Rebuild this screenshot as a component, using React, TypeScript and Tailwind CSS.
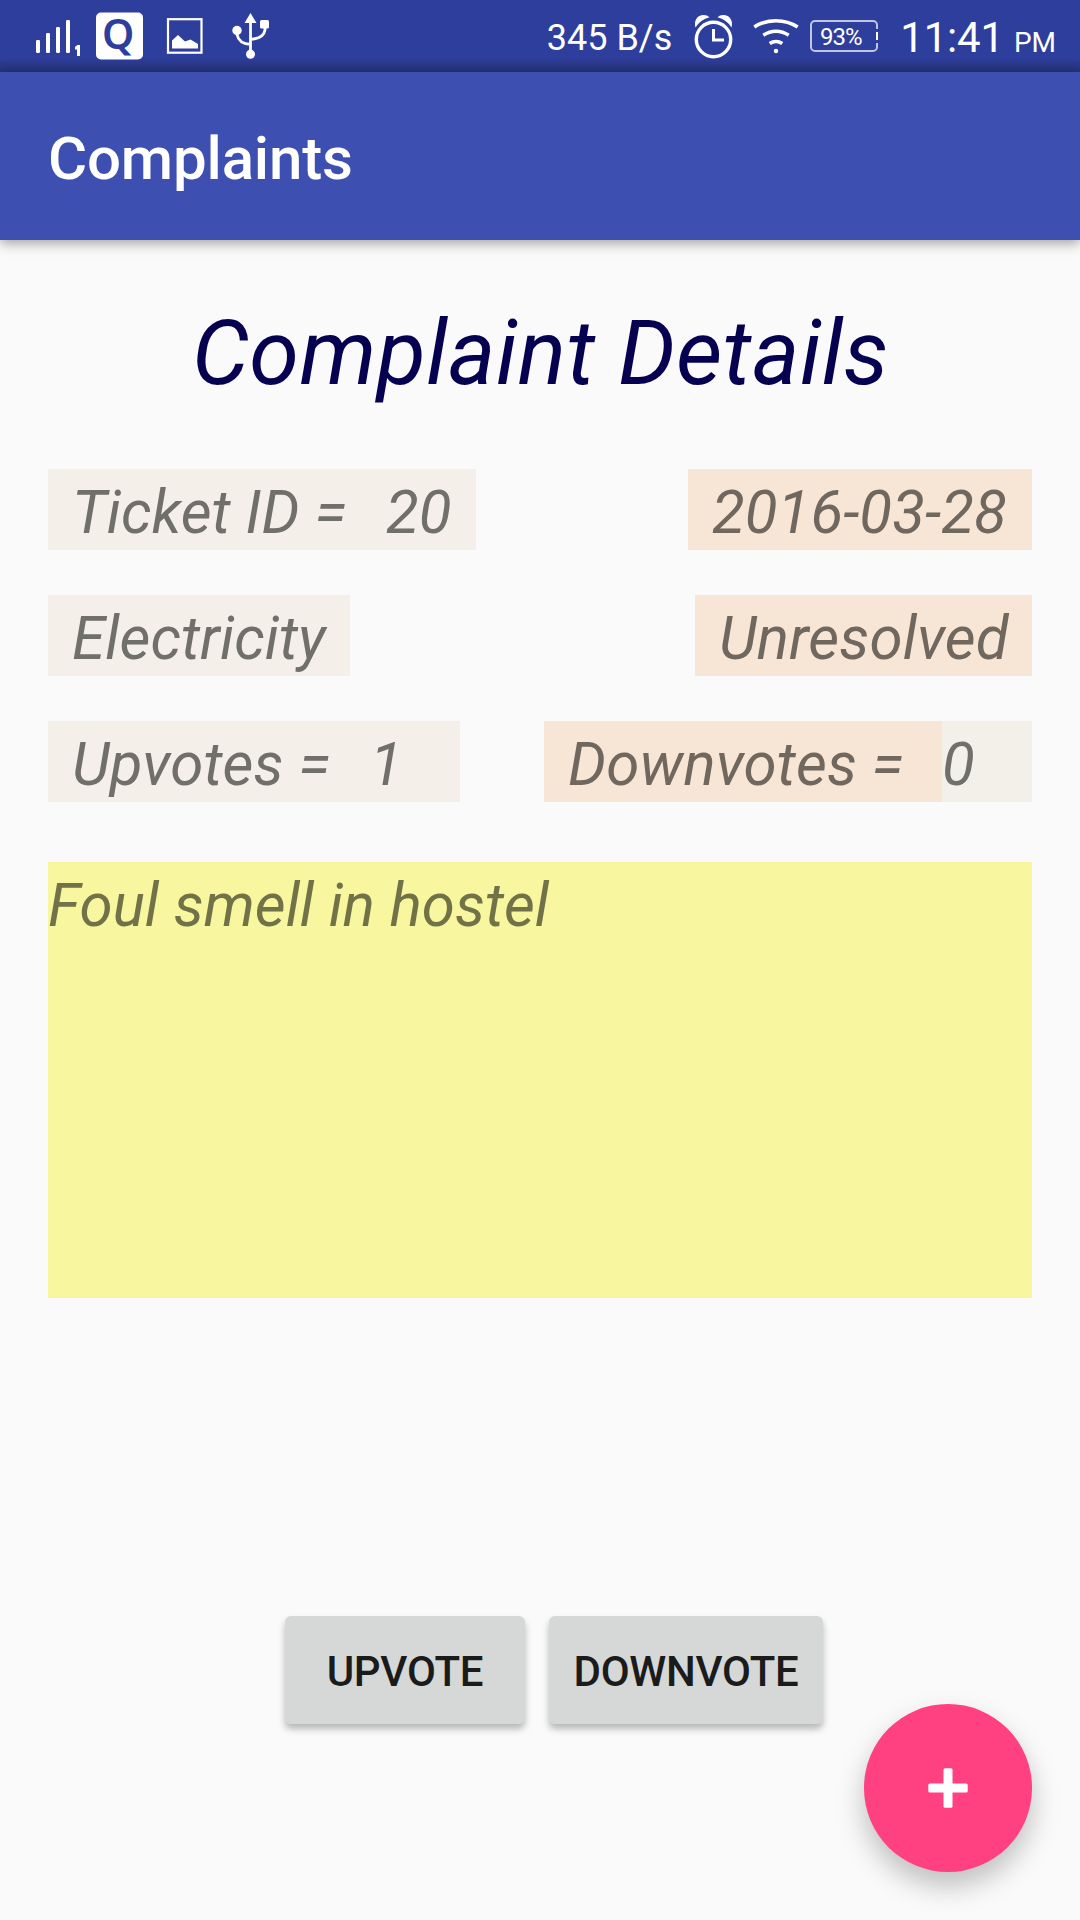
import React from "react";

function StatusBar() {
  return (
    <div className="flex h-[72px] w-full shrink-0 bg-[linear-gradient(to_bottom,#2e3e9c_0,#2e3e9c_58px,#2a3888_66px,#27337a_72px)] text-white">
      <svg className="h-[72px] w-[290px] shrink-0" viewBox="0 0 290 72" fill="#fff">
        <rect x="36" y="40" width="4" height="13" rx="1.2" />
        <rect x="46" y="33" width="4" height="20" rx="1.2" />
        <rect x="56" y="27" width="4" height="26" rx="1.2" />
        <rect x="66" y="20" width="4" height="33" rx="1.2" />
        <path d="M77.3 45h2.700v11h-3v-6.500h-2v-2.500z" />
        <rect x="96" y="12.500" width="47" height="47" rx="5" />
        <text x="102" y="48.500" fontFamily="Noto Sans" fontWeight="600" fontSize="41" fill="#2e3e9c">Q</text>
        <rect x="168" y="19.200" width="33.500" height="33.500" fill="none" stroke="#fff" strokeWidth="2.200" />
        <path d="M172 48.500V40.500l6-5.500 7 6.500 5.500-2 7.500 4.500v4.500z" />
        <path d="M250.500 13l6 10h-12z" />
        <rect x="260" y="20" width="9" height="8.500" rx="1.500" />
        <circle cx="237" cy="30.500" r="4.700" />
        <circle cx="250.500" cy="54.200" r="4.500" />
        <path d="M250.500 20V54M237 31v3.500q2 9.500 13.500 9.800M265 27v3q-1.500 8.700-14.500 9.300" fill="none" stroke="#fff" strokeWidth="2.800" />
      </svg>
      <div className="flex flex-1 items-center justify-end pr-[24px]">
        <span className="mr-[20px] mt-[4px] text-[36px] leading-none whitespace-pre">345 B/s</span>
        <svg className="h-[72px] w-[186px] shrink-0" viewBox="692 0 186 72">
          <g fill="none" stroke="#fff" strokeWidth="3.400">
            <circle cx="713.500" cy="39.500" r="17.200" />
            <path d="M713.500 29v11h10.500" strokeWidth="3" />
          </g>
          <path d="M695.500 27.500c-2-7 2-12.500 8-12.500q4 0 6 2.300-9 2.300-14 10.200zM731.500 27.500c2-7-2-12.500-8-12.500q-4 0-6 2.300 9 2.300 14 10.200z" fill="#fff" />
          <g fill="none" stroke="#fff" strokeWidth="3.500">
            <path d="M754.300 27q9.500-6.300 21.700-6.300T797.700 27" />
            <path d="M763.300 35.300q6-4 12.700-4t12.700 4" />
            <path d="M769.700 43.500q3-2 6.300-2t6.300 2" />
          </g>
          <circle cx="776" cy="51" r="2.200" fill="#fff" />
          <rect x="811" y="21" width="66" height="30" rx="4" fill="none" stroke="#c0c5e2" strokeWidth="2" />
          <path d="M877 29v14" stroke="#2e3e9c" strokeWidth="3" />
          <path d="M877 32v8" stroke="#fff" strokeWidth="2" />
          <text x="820" y="45" fontFamily="Roboto" fontSize="24" textLength="42.500" fill="#fff">93%</text>
        </svg>
        <span className="mt-[3px] ml-[22px] flex items-baseline whitespace-pre">
          <span className="text-[42px] leading-[74px] tracking-[-0.200px]">11:41</span>
          <span className="ml-[10px] text-[28px]">PM</span>
        </span>
      </div>
    </div>
  );
}

function Chip({ className, children }: { className: string; children: React.ReactNode }) {
  return (
    <div className={"h-[81px] shrink-0 whitespace-pre pt-[6px] text-[60px] leading-[75px] italic tracking-[0.100px] " + className}>
      {children}
    </div>
  );
}

export default function App() {
  return (
    <div className="relative flex h-[1920px] w-[1080px] flex-col overflow-hidden bg-[#fafafa] font-['Roboto',sans-serif]">
      <StatusBar />
      <header className="flex h-[168px] shrink-0 items-center bg-[#3d50b2] pl-[48px] pt-[6px] text-[60px] font-medium leading-none tracking-[-0.170px] text-white shadow-[0_3px_12px_rgba(0,0,0,0.38)]">
        Complaints
      </header>
      <main className="flex flex-col px-[48px]">
        <h1 className="mt-[51px] h-[117px] pl-[1px] text-center text-[90px] leading-[126px] tracking-[0.520px] text-[#060051] italic">
          Complaint Details
        </h1>
        <div className="mt-[61px] flex flex-col gap-[45px] text-[#706f69]">
          <div className="flex justify-between">
            <Chip className="flex w-[428px] bg-[#f4efe9] px-[24px]">
              <span className="w-[314px]">Ticket ID =</span>
              <span>20</span>
            </Chip>
            <Chip className="w-[344px] bg-[#f7e6d6] pl-[24px] text-[#70685f]">2016-03-28</Chip>
          </div>
          <div className="flex justify-between">
            <Chip className="w-[302px] bg-[#f4efe9] pl-[24px]">Electricity</Chip>
            <Chip className="w-[337px] bg-[#f7e6d6] pl-[24px] text-[#70685f]">Unresolved</Chip>
          </div>
          <div className="flex justify-between">
            <Chip className="flex w-[412px] bg-[#f4efe9] pl-[24px]">
              <span className="w-[298px]">Upvotes =</span>
              <span>1</span>
            </Chip>
            <div className="flex">
              <Chip className="w-[398px] bg-[#f7e6d6] pl-[24px] text-[#70685f]">Downvotes =</Chip>
              <Chip className="w-[90px] bg-[#f3efe9] text-[#6f706c]">0</Chip>
            </div>
          </div>
        </div>
        <div className="mt-[60px] h-[436px] bg-[#f8f69f] pt-[6px] text-[60px] leading-[75px] text-[#727248] italic">
          Foul smell in hostel
        </div>
        <div className="mt-[318px] flex gap-[24px] pl-[237px] text-[42px] font-medium tracking-[-0.300px] text-[#1b1b1b]">
          <button className="h-[108px] w-[240px] rounded-[6px] bg-[#d6d8d7] pt-[3px] leading-none shadow-[0_5px_7px_rgba(0,0,0,0.27)]">UPVOTE</button>
          <button className="h-[108px] w-[274px] rounded-[6px] bg-[#d6d8d7] pt-[3px] leading-none shadow-[0_5px_7px_rgba(0,0,0,0.27)]">DOWNVOTE</button>
        </div>
      </main>
      <button aria-label="Add" className="absolute right-[48px] bottom-[48px] flex size-[168px] items-center justify-center rounded-full bg-[#ff4081] shadow-[0_14px_28px_rgba(0,0,0,0.24)]">
        <svg className="size-[40px]" viewBox="0 0 40 40" fill="#fff">
          <rect x="15.500" y="0.300" width="9" height="39.400" rx="1.500" />
          <rect x="0.300" y="15.500" width="39.400" height="9" rx="1.500" />
        </svg>
      </button>
    </div>
  );
}
